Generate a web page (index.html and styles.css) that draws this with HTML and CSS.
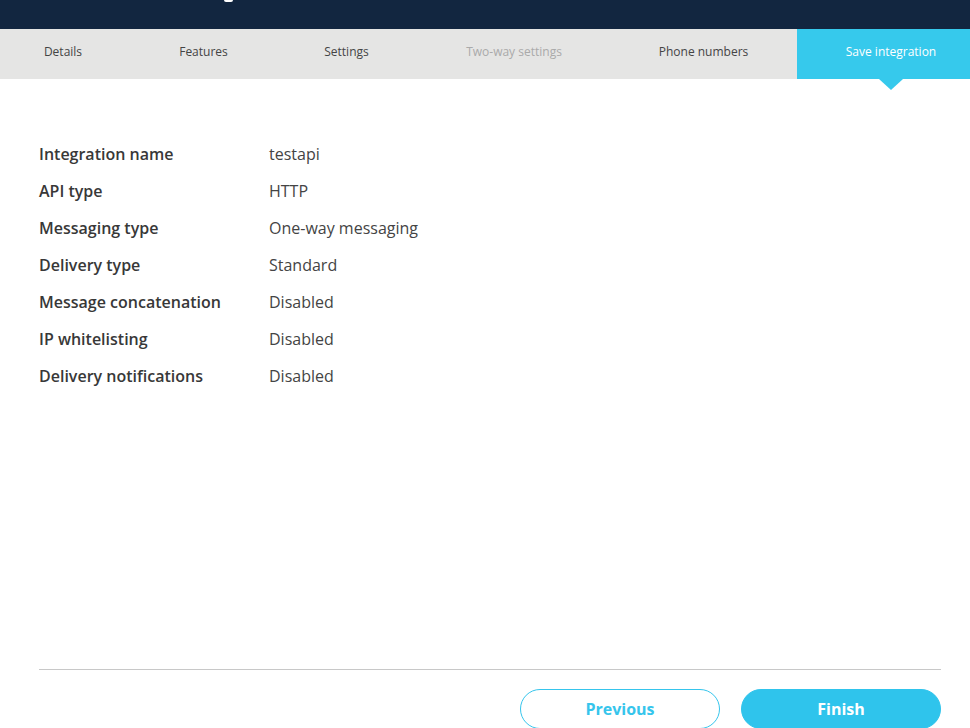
FILE: index.html
```html
<!DOCTYPE html>
<html lang="en">
<head>
<meta charset="utf-8">
<title>Save integration</title>
<link rel="stylesheet" href="styles.css">
</head>
<body>
<header class="topbar"><span class="title-tail"></span></header>
<nav class="steps">
  <div class="step">Details</div>
  <div class="step">Features</div>
  <div class="step">Settings</div>
  <div class="step step-disabled">Two-way settings</div>
  <div class="step step-phone">Phone numbers</div>
  <div class="step step-active">Save integration</div>
</nav>
<main class="content">
  <dl class="summary">
    <div class="row"><dt>Integration name</dt><dd>testapi</dd></div>
    <div class="row"><dt>API type</dt><dd>HTTP</dd></div>
    <div class="row"><dt>Messaging type</dt><dd>One-way messaging</dd></div>
    <div class="row"><dt>Delivery type</dt><dd>Standard</dd></div>
    <div class="row"><dt>Message concatenation</dt><dd>Disabled</dd></div>
    <div class="row"><dt>IP whitelisting</dt><dd>Disabled</dd></div>
    <div class="row"><dt>Delivery notifications</dt><dd>Disabled</dd></div>
  </dl>
  <footer class="actions">
    <button class="btn btn-outline">Previous</button>
    <button class="btn btn-primary">Finish</button>
  </footer>
</main>
</body>
</html>
```
FILE: styles.css
```css
html, body {
  margin: 0;
  padding: 0;
  background: #ffffff;
  font-family: "Open Sans", "Noto Sans", sans-serif;
  color: #333333;
  height: 728px;
  overflow: hidden;
}

.topbar {
  height: 29px;
  background: #122640;
  display: flex;
}

.title-tail {
  margin-left: 224px;
  width: 9px;
  height: 2px;
  background: #ffffff;
  border-radius: 0 0 3px 3px;
}

.steps {
  height: 50px;
  background: #e5e5e4;
  display: grid;
  grid-template-columns: 126px 155px 131px 204px 181px 1fr;
}

.step {
  display: flex;
  align-items: center;
  justify-content: center;
  font-size: 12px;
  color: #444444;
  padding-bottom: 5px;
}

.step-disabled {
  color: #aaaaaa;
}

.step-phone {
  padding-right: 6px;
}

.step-active {
  position: relative;
  background: #36c9ec;
  color: #ffffff;
  padding-left: 15px;
}

.step-active::after {
  content: "";
  position: absolute;
  left: 82px;
  top: 50px;
  border-left: 12px solid transparent;
  border-right: 12px solid transparent;
  border-top: 11px solid #36c9ec;
}

.content {
  padding: 0 29px 0 39px;
}

.summary {
  margin: 56px 0 0 0;
  height: 534px;
  display: flex;
  flex-direction: column;
}

.row {
  display: flex;
  height: 37px;
  align-items: center;
  font-size: 16px;
}

.row dt {
  width: 230px;
  font-weight: 600;
  color: #383838;
}

.row dd {
  margin: 0;
  color: #444444;
}

.actions {
  border-top: 1px solid #c8c8c8;
  padding-top: 19px;
  display: flex;
  justify-content: flex-end;
  gap: 21px;
}

.btn {
  width: 200px;
  height: 40px;
  border-radius: 20px;
  font-family: "Open Sans", "Noto Sans", sans-serif;
  font-size: 16px;
  font-weight: 700;
  cursor: pointer;
  padding: 0 0 1px 0;
}

.btn-outline {
  background: #ffffff;
  border: 1px solid #36c5ec;
  color: #36c5ec;
}

.btn-primary {
  background: #2fc4ec;
  border: 1px solid #2fc4ec;
  color: #ffffff;
}
```
